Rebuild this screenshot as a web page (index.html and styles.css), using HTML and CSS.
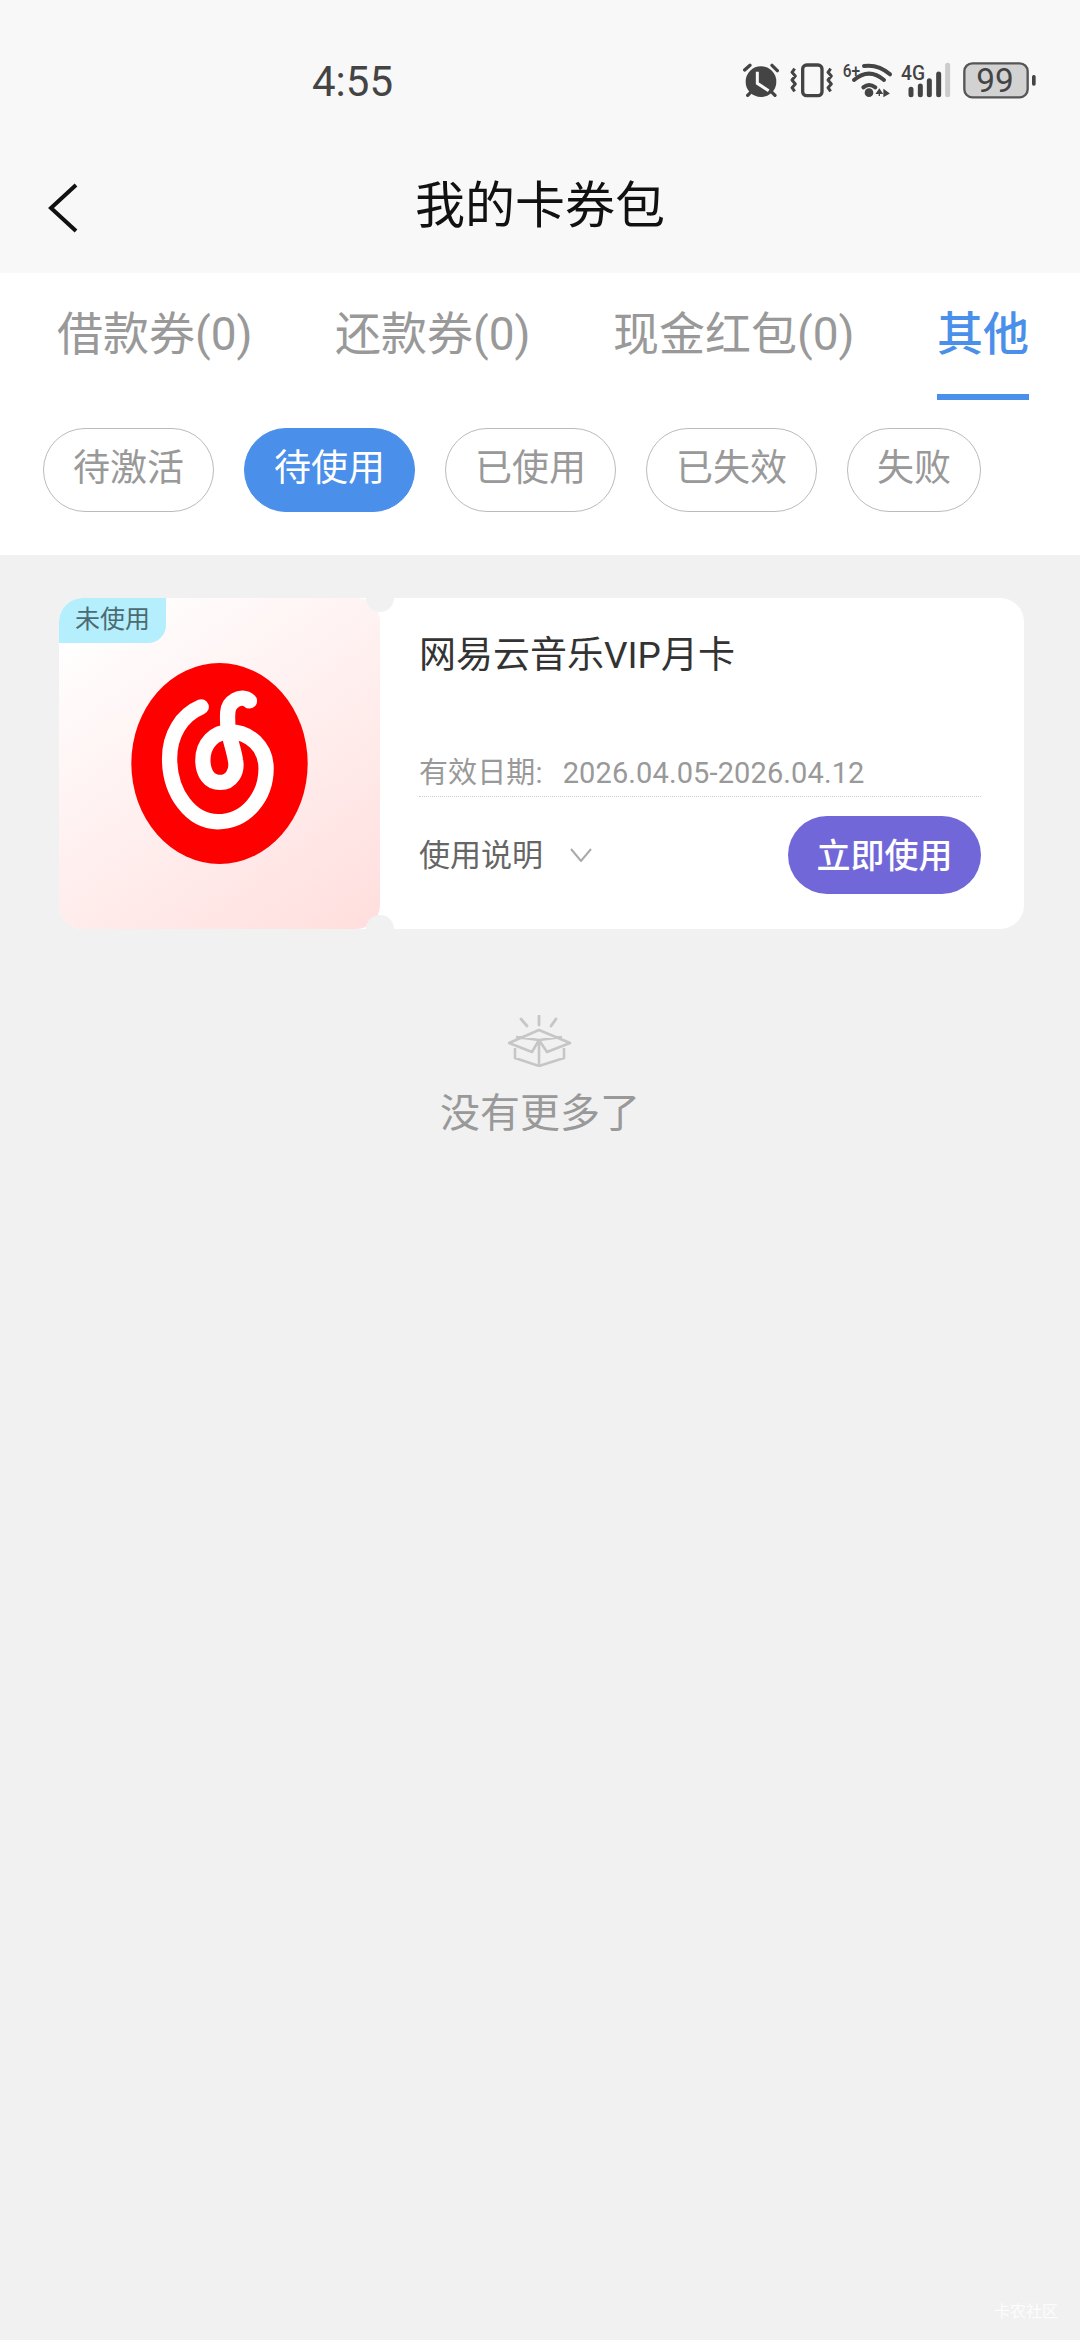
FILE: index.html
```html
<!DOCTYPE html>
<html>

<head>
    <meta charset="utf-8" />
    <title>我的卡券包</title>
    <meta name="viewport" content="width=device-width, initial-scale=1">
    <link rel="stylesheet" href="styles.css">
</head>

<body>
    <div class="page">
        <div class="status-bar">
            <span class="time">4:55</span>
            <svg class="status-icons" viewBox="0 0 1140 240" width="380" height="80">
                <!-- alarm -->
                <circle cx="183" cy="125" r="46" fill="#444" />
                <path d="M172 95V130L206 152" fill="none" stroke="#f8f8f8" stroke-width="9" />
                <path d="M134 90L150 76M216 76L232 92M143 166L155 154M225 166L213 154" fill="none" stroke="#444" stroke-width="10" stroke-linecap="round" />
                <!-- vibrate -->
                <rect x="308" y="75" width="58" height="92" rx="12" fill="none" stroke="#444" stroke-width="10" />
                <path d="M284 86L276 97L286 108L276 120L286 132L276 143L284 154M392 86L384 97L394 108L384 120L394 132L384 143L392 154" fill="none" stroke="#444" stroke-width="9" stroke-linejoin="round" />
                <!-- wifi -->
                <path d="M492 78Q535 72 570 103M462 120Q507 82 552 120M490 142Q507 128 526 142" fill="none" stroke="#444" stroke-width="12" stroke-linecap="round" />
                <text class="net-text" x="428" y="110" textLength="52" lengthAdjust="spacingAndGlyphs">6+</text>
                <circle cx="507" cy="158" r="13" fill="#444" />
                <path d="M538 168V148M530 160L538 148L546 160H530ZM552 148V168M552 150L566 160L552 168Z" fill="#444" stroke="#444" stroke-width="4" />
                <!-- signal -->
                <text class="net-text sig" x="603" y="120" textLength="72" lengthAdjust="spacingAndGlyphs">4G</text>
                <path d="M633 148V164M661 138V164M688 122V164M716 102V164" fill="none" stroke="#444" stroke-width="15" stroke-linecap="round" />
                <path d="M743 76V164" fill="none" stroke="#ccc" stroke-width="15" stroke-linecap="round" />
                <!-- battery -->
                <rect x="793" y="70" width="190" height="102" rx="24" fill="#d2d2d2" stroke="#555" stroke-width="7" />
                <text class="battery-text" x="885" y="156" text-anchor="middle">99</text>
                <rect x="996" y="105" width="11" height="32" rx="5" fill="#444" />
            </svg>
        </div>

        <div class="nav-bar">
            <svg class="back" viewBox="0 0 30 50" width="30" height="50">
                <path d="M28 2L3 25L28 48" fill="none" stroke="#111" stroke-width="4" />
            </svg>
            <h1 class="nav-title">我的卡券包</h1>
        </div>

        <div class="filters">
            <div class="tabs">
                <div class="tab">借款券(0)</div>
                <div class="tab">还款券(0)</div>
                <div class="tab">现金红包(0)</div>
                <div class="tab active">其他</div>
            </div>
            <div class="chips">
                <div class="chip">待激活</div>
                <div class="chip on">待使用</div>
                <div class="chip">已使用</div>
                <div class="chip">已失效</div>
                <div class="chip">失败</div>
            </div>
        </div>

        <div class="coupon">
            <div class="coupon-pic">
                <span class="tag">未使用</span>
                <svg viewBox="270 248 530 604" width="177" height="201">
                    <ellipse cx="535" cy="550" rx="265" ry="302" fill="#fe0000" />
                    <path d="M480 380C420 405 385 465 385 535C385 640 450 725 530 725C615 725 675 650 675 565C675 500 625 455 565 455C520 455 485 490 485 540C485 580 505 607 537 607C570 607 590 575 583 540C575 490 555 460 560 395C562 365 600 340 625 362" fill="none" stroke="#fff" stroke-width="46" stroke-linecap="round" />
                </svg>
            </div>
            <div class="coupon-body">
                <div class="coupon-name">网易云音乐VIP月卡</div>
                <div class="coupon-date">
                    <span>有效日期:</span>
                    <span class="date-range">2026.04.05-2026.04.12</span>
                </div>
                <div class="coupon-foot">
                    <span class="usage">使用说明</span>
                    <svg class="usage-arrow" viewBox="0 0 22 14" width="22" height="14">
                        <path d="M1 1L11 13L21 1" fill="none" stroke="#aaa" stroke-width="2" />
                    </svg>
                    <button class="use-btn">立即使用</button>
                </div>
            </div>
            <span class="notch notch-top"></span>
            <span class="notch notch-bottom"></span>
        </div>

        <div class="no-more">
            <svg viewBox="0 0 64 52" width="64" height="52">
                <path d="M13 4L19 11M31 1V10M48 4L43 11" fill="none" stroke="#c6c6c6" stroke-width="2.8" stroke-linecap="round" />
                <path d="M31 15L1 28L24 37L31 25L39 37L62 28ZM8 22L31 25L54 22M31 25V51M7 33V43L31 51L56 43V33" fill="none" stroke="#c6c6c6" stroke-width="2.6" stroke-linejoin="round" />
            </svg>
            <div class="no-more-text">没有更多了</div>
        </div>

        <div class="watermark">卡农社区</div>
    </div>
</body>

</html>
```

FILE: styles.css
```css
* {
    box-sizing: border-box;
}

body {
    margin: 0;
    background-color: #f1f1f2;
    font-family: Roboto, 'Noto Sans CJK SC', sans-serif;
}

.page {
    position: relative;
    width: 1080px;
    height: 2340px;
    overflow: hidden;
}

.status-bar {
    display: flex;
    align-items: center;
    height: 123px;
    padding: 40px 0 0 312px;
    background-color: #f8f8f8;
}

.time {
    font-size: 42px;
    line-height: 40px;
    color: #444;
}

.status-icons {
    margin-left: auto;
    margin-top: -3px;
}

.net-text {
    font-size: 54px;
    font-weight: 500;
    fill: #444;
}

.net-text.sig {
    font-size: 60px;
}

.battery-text {
    font-size: 100px;
    font-weight: 400;
    fill: #444;
}

.nav-bar {
    position: relative;
    display: flex;
    align-items: center;
    justify-content: center;
    height: 150px;
    padding-top: 6px;
    background-color: #f8f8f8;
}

.back {
    position: absolute;
    left: 48px;
    top: 60px;
}

.nav-title {
    margin: 0;
    font-size: 50px;
    font-weight: 400;
    color: #111;
}

.filters {
    height: 282px;
    background-color: #fff;
}

.tabs {
    display: flex;
    justify-content: space-between;
    height: 127px;
    padding: 0 51px 0 57px;
}

.tab {
    height: 127px;
    padding-top: 27px;
    font-size: 46px;
    line-height: 68px;
    color: #999;
    border-bottom: 6px solid transparent;
}

.tab.active {
    color: #4a8fe9;
    font-weight: 500;
    border-bottom-color: #4a8fe9;
}

.chips {
    display: flex;
    gap: 30px;
    padding: 28px 0 0 43px;
}

.chip {
    height: 84px;
    padding: 0 29px;
    font-size: 37px;
    line-height: 80px;
    color: #999;
    border: 1px solid #bbb;
    border-radius: 42px;
}

.chip.on {
    color: #fff;
    background-color: #4a8fe9;
    border-color: #4a8fe9;
}

.coupon {
    position: relative;
    display: flex;
    height: 331px;
    margin: 43px 56px 0 59px;
    background-color: #fff;
    border-radius: 24px;
}

.coupon-pic {
    position: relative;
    display: flex;
    align-items: center;
    justify-content: center;
    width: 321px;
    background: linear-gradient(145deg, #fff 5%, #ffdedd 100%);
    border-radius: 24px;
}

.tag {
    position: absolute;
    left: 0;
    top: 0;
    width: 107px;
    height: 45px;
    font-size: 25px;
    line-height: 43px;
    text-align: center;
    color: #4b6b72;
    background-color: #b5eefc;
    border-radius: 24px 0 18px 0;
}

.notch {
    position: absolute;
    left: 307px;
    width: 28px;
    height: 28px;
    background-color: #f1f1f2;
    border-radius: 50%;
}

.notch-top {
    top: -14px;
}

.notch-bottom {
    bottom: -14px;
}

.coupon-body {
    flex: 1;
    padding: 0 43px 0 39px;
}

.coupon-name {
    height: 114px;
    padding-top: 34px;
    font-size: 37px;
    line-height: 48px;
    color: #333;
}

.coupon-date {
    display: flex;
    height: 85px;
    padding-top: 41px;
    font-size: 29px;
    line-height: 40px;
    letter-spacing: 0.12px;
    color: #999;
    border-bottom: 1px dotted #ccc;
}

.date-range {
    margin-left: 20px;
}

.coupon-foot {
    display: flex;
    align-items: center;
    margin-top: 19px;
}

.usage {
    margin-bottom: 6px;
    font-size: 31px;
    color: #666;
}

.usage-arrow {
    margin-left: 27px;
}

.use-btn {
    width: 193px;
    height: 78px;
    margin-left: auto;
    padding: 0 0 4px;
    font-family: inherit;
    font-size: 34px;
    font-weight: 500;
    color: #fff;
    background-color: #7267d8;
    border: none;
    border-radius: 39px;
}

.no-more {
    display: flex;
    flex-direction: column;
    align-items: center;
    margin-top: 86px;
}

.no-more-text {
    margin-top: 17px;
    font-size: 40px;
    line-height: 60px;
    color: #999;
}

.watermark {
    position: absolute;
    right: 22px;
    bottom: 18px;
    font-size: 16px;
    color: rgba(255, 255, 255, 0.85);
}
```
